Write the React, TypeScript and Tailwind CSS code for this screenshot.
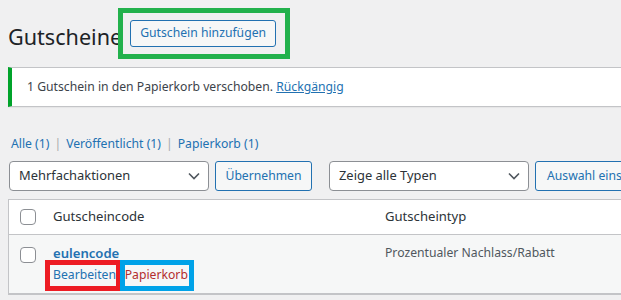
import React from 'react';

function Chevron() {
  return (
    <svg width="12" height="8" viewBox="0 0 12 8" className="shrink-0">
      <path d="M1 1.5l5 5 5-5" stroke="#50575e" strokeWidth="1.6" fill="none" />
    </svg>
  );
}

function Select({ label, width }: { label: string; width: string }) {
  return (
    <div
      className={`flex h-[30px] items-center justify-between rounded-[4px] border border-[#8c8f94] bg-white pl-[9px] pr-[8px] text-[12.9px] text-[#2c3338] ${width}`}
    >
      <span>{label}</span>
      <Chevron />
    </div>
  );
}

function SecondaryButton({ label, width }: { label: string; width: string }) {
  return (
    <button
      className={`h-[30px] shrink-0 rounded-[3px] border border-[#2271b1] bg-[#f6f7f7] text-[12.2px] text-[#2271b1] ${width}`}
    >
      {label}
    </button>
  );
}

function Checkbox() {
  return <div className="h-[16px] w-[16px] shrink-0 rounded-[4px] border border-[#8c8f94] bg-white" />;
}

export default function App() {
  return (
    <div className="relative h-[300px] w-[621px] overflow-hidden bg-[#f0f0f1] font-['Noto_Sans',sans-serif] text-[12.2px] text-[#3c434a]">
      <div className="w-[780px] pl-2">
        {/* heading */}
        <div className="flex items-start">
          <h1 className="mt-[22px] text-[21.6px] leading-[30px] text-[#1d2327]">Gutscheine</h1>
          <button className="ml-[8px] mt-[20px] h-[27px] rounded-[3px] border border-[#2271b1] bg-[#f6f7f7] px-[9px] text-[12.2px] text-[#2271b1]">
            Gutschein hinzufügen
          </button>
        </div>

        {/* notice */}
        <div className="mt-[15px] flex h-[40px] items-center border border-l-4 border-[#c3c4c7] border-l-[#00a32a] bg-white pl-[15px] shadow-[0_1px_1px_rgba(0,0,0,0.04)]">
          <span>
            1 Gutschein in den Papierkorb verschoben.{' '}
            <a className="text-[#2271b1] underline">Rückgängig</a>
          </span>
        </div>

        {/* views */}
        <div className="ml-[3px] mt-[27px] flex h-[20px] items-center text-[#2271b1]">
          <span>Alle (1)</span>
          <span className="mx-[5px] text-[#a7aaad]">|</span>
          <span>Veröffentlicht (1)</span>
          <span className="mx-[5px] text-[#a7aaad]">|</span>
          <span>Papierkorb (1)</span>
        </div>

        {/* controls */}
        <div className="ml-[1px] mt-[7px] flex items-center">
          <Select label="Mehrfachaktionen" width="w-[200px]" />
          <div className="ml-[6px]">
            <SecondaryButton label="Übernehmen" width="w-[97px]" />
          </div>
          <div className="ml-[17px]">
            <Select label="Zeige alle Typen" width="w-[200px]" />
          </div>
          <div className="ml-[6px]">
            <button className="h-[30px] rounded-[3px] border border-[#2271b1] bg-[#f6f7f7] px-[11px] text-[12.2px] text-[#2271b1]">
              Auswahl einschränken
            </button>
          </div>
        </div>

        {/* table */}
        <div className="mt-[8px] border border-[#c3c4c7] bg-white">
          <div className="flex h-[35px] items-center border-b border-[#c3c4c7] text-[13.1px] text-[#2c3338]">
            <div className="w-[44px] pl-[11px]">
              <Checkbox />
            </div>
            <div className="w-[332px]">Gutscheincode</div>
            <div>Gutscheintyp</div>
          </div>
          <div className="flex h-[59px] items-start border-b border-[#c3c4c7] bg-[#f6f7f7]">
            <div className="w-[44px] pl-[11px] pt-[12px]">
              <Checkbox />
            </div>
            <div className="w-[332px] pt-[8px]">
              <div className="text-[13.1px] font-semibold leading-[20px] text-[#2271b1]">eulencode</div>
              <div className="mt-[2px] flex leading-[20px]">
                <span className="text-[#2271b1]">Bearbeiten</span>
                <span className="mx-[1px] text-[#a7aaad]">|</span>
                <span className="text-[#b32d2e]">Papierkorb</span>
              </div>
            </div>
            <div className="pt-[8px] leading-[20px] text-[#50575e]">Prozentualer Nachlass/Rabatt</div>
          </div>
        </div>
      </div>

      {/* annotations */}
      <div className="absolute left-[118px] top-[8px] h-[51px] w-[172px] border-[5px] border-[#22b14c]" />
      <div className="absolute left-[45px] top-[260px] h-[31px] w-[76px] border-[5px] border-[#ed1c24]" />
      <div className="absolute left-[120px] top-[260px] h-[31px] w-[74px] border-[5px] border-[#00a2e8]" />
    </div>
  );
}
